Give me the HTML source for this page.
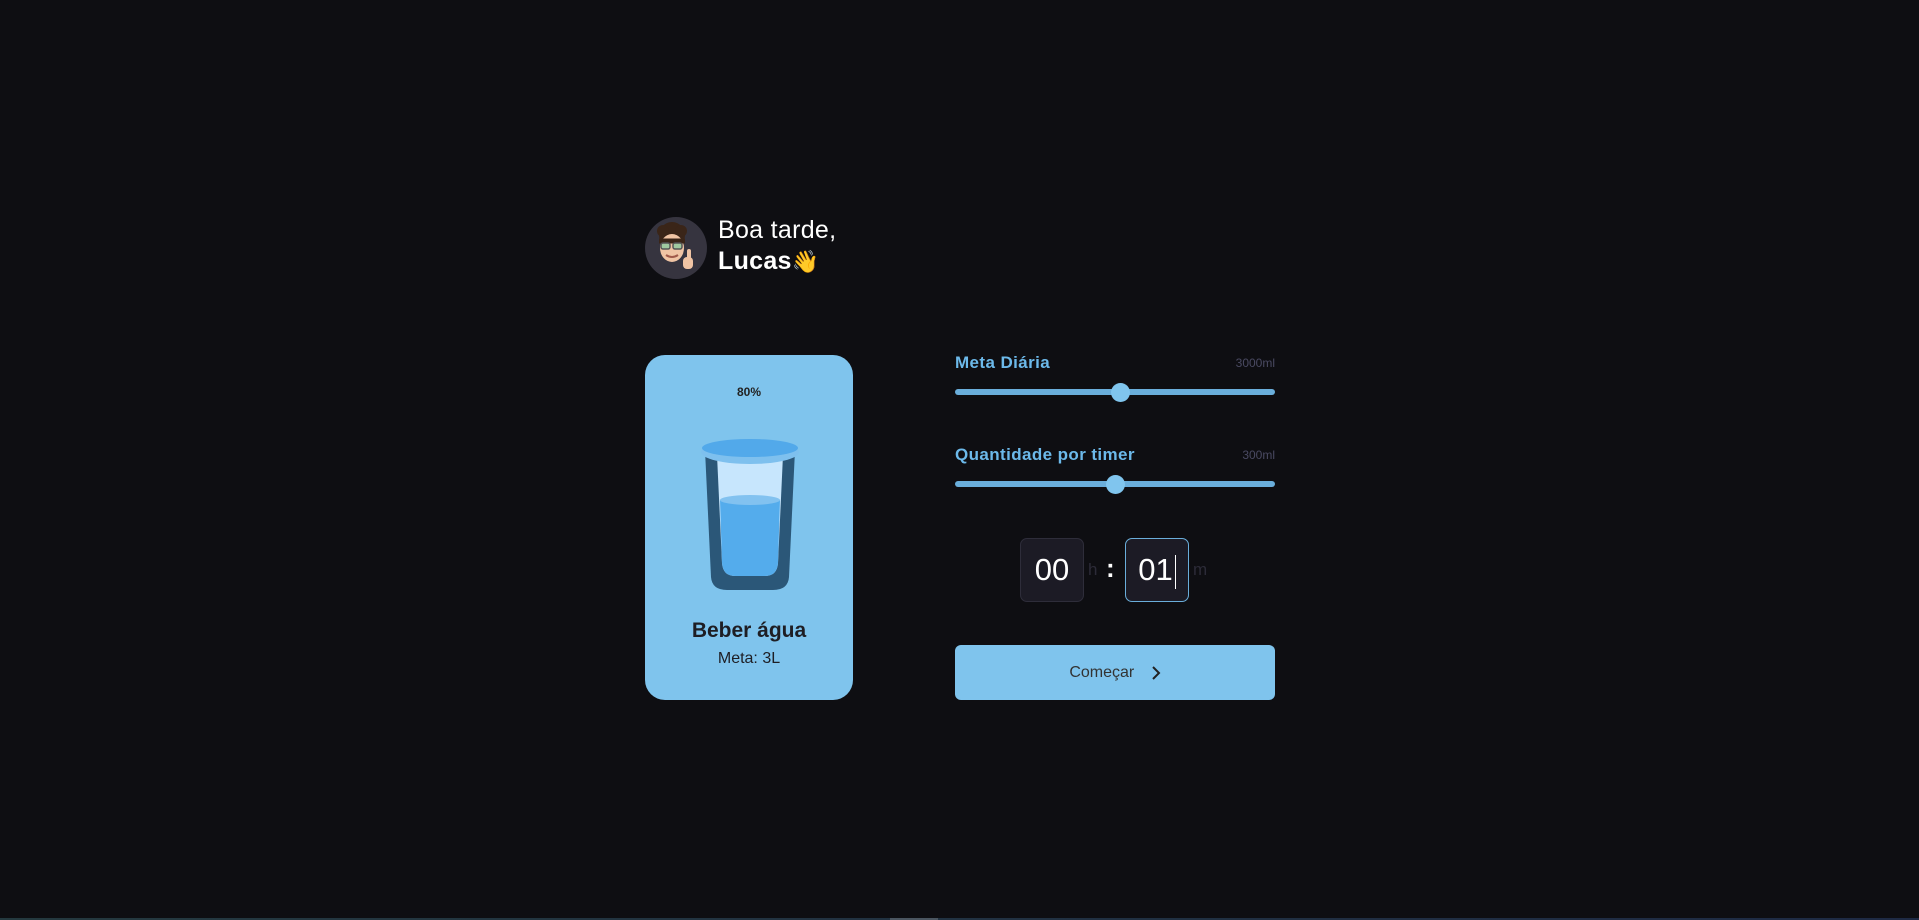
<!DOCTYPE html>
<html><head><meta charset="utf-8"><style>
*{margin:0;padding:0;box-sizing:border-box}
body{width:1919px;height:920px;background:#0e0e12;position:relative;overflow:hidden;font-family:"Liberation Sans",sans-serif}
.abs{position:absolute}
.avatar{left:645px;top:217px;width:62px;height:62px;border-radius:50%;background:#36343f;overflow:hidden}
.hello{left:718px;top:215px;color:#fff;font-size:25px;line-height:31px;letter-spacing:0.3px}
.card{left:645px;top:355px;width:208px;height:345px;border-radius:20px;background:#7fc4ed}
.lbl{color:#6cb9ea;font-size:17px;font-weight:bold;left:955px;letter-spacing:0.4px}
.val{color:#4a4a62;font-size:12px;right:644px}
.track{left:955px;width:320px;height:6px;border-radius:3px;background:#6aaedb}
.thumb{width:19px;height:19px;border-radius:50%;background:#80c5ee}
.box{top:538px;width:64px;height:64px;border-radius:7px;background:#1c1b25;border:1px solid #2e2d3a;color:#fff;font-size:31px;text-align:center;line-height:62px}
</style></head><body>
<div class="abs avatar"><svg width="62" height="62" viewBox="0 0 62 62">
<circle cx="27" cy="18" r="13" fill="#3a2518"/><circle cx="18" cy="14" r="6" fill="#3a2518"/><circle cx="36" cy="14" r="6" fill="#3a2518"/>
<ellipse cx="27" cy="31" rx="12" ry="14" fill="#f0c4a4"/>
<path d="M14 24h26" stroke="#3a2518" stroke-width="5"/>
<rect x="16" y="26" width="9" height="6" rx="2" fill="#9fc9a0" stroke="#555" stroke-width="1.5"/><rect x="28" y="26" width="9" height="6" rx="2" fill="#9fc9a0" stroke="#555" stroke-width="1.5"/>
<path d="M21 38q6 4 12 0" stroke="#a05a4a" stroke-width="2" fill="none"/>
<rect x="38" y="40" width="10" height="12" rx="4" fill="#f0c4a4"/><rect x="42" y="32" width="4" height="10" rx="2" fill="#f0c4a4"/>
</svg></div>
<div class="abs hello">Boa tarde,<br><b>Lucas</b><span style="font-size:22px">👋</span></div>
<div class="abs card">
<div class="abs" style="left:0;width:208px;top:30px;text-align:center;font-size:12px;font-weight:bold;color:#222">80%</div>
<svg class="abs" style="left:50px;top:80px" width="110" height="160" viewBox="0 0 110 160">
<path d="M10 15 L16 142 Q17 155 32 155 L78 155 Q93 155 94 142 L100 15 Z" fill="#2b5778"/>
<path d="M22 20 L27 128 Q28 141 40 141 L70 141 Q82 141 83 128 L88 20 Z" fill="#c7e6fd"/>
<path d="M25 65 L27 128 Q28 141 40 141 L70 141 Q82 141 83 128 L85 65 Q55 58 25 65Z" fill="#54acec"/>
<ellipse cx="55" cy="65" rx="30" ry="5" fill="#82c2f0"/>
<ellipse cx="55" cy="17" rx="49" ry="12" fill="#7ec0ee"/>
<ellipse cx="55" cy="13" rx="48" ry="9" fill="#52a9ea"/>
</svg>
<div class="abs" style="left:0;width:208px;top:264px;text-align:center;font-size:21px;font-weight:bold;color:#1e1e24">Beber água</div>
<div class="abs" style="left:0;width:208px;top:295px;text-align:center;font-size:16px;color:#1e1e24">Meta: 3L</div>
</div>
<div class="abs lbl" style="top:353px">Meta Diária</div>
<div class="abs val" style="top:356px">3000ml</div>
<div class="abs track" style="top:389px"></div>
<div class="abs thumb" style="left:1111px;top:383px"></div>
<div class="abs lbl" style="top:445px">Quantidade por timer</div>
<div class="abs val" style="top:448px">300ml</div>
<div class="abs track" style="top:481px"></div>
<div class="abs thumb" style="left:1106px;top:475px"></div>
<div class="abs box" style="left:1020px">00</div>
<div class="abs" style="left:1088px;top:560px;color:#2c2b38;font-size:17px">h</div>
<div class="abs" style="left:1106px;top:553px;color:#fff;font-size:26px;font-weight:bold">:</div>
<div class="abs box" style="left:1125px;border-color:#6aaedb">01<span style="display:inline-block;width:1px;height:34px;background:#fff;vertical-align:middle;margin-left:2px"></span></div>
<div class="abs" style="left:1193px;top:560px;color:#2c2b38;font-size:17px">m</div>
<div class="abs" style="left:955px;top:645px;width:320px;height:55px;border-radius:6px;background:#7fc4ed;color:#333;font-size:16px;text-align:center;line-height:55px">Começar <svg style="vertical-align:middle;margin-left:12px" width="10" height="14" viewBox="0 0 10 14"><path d="M2 1l6 6-6 6" stroke="#222" stroke-width="2" fill="none"/></svg></div>
<div class="abs" style="left:0;top:918px;width:1919px;height:2px;background:linear-gradient(90deg,#24393f,#1e2a44)"></div>
<div class="abs" style="left:890px;top:918px;width:48px;height:2px;background:#4a5560"></div>
</body></html>
